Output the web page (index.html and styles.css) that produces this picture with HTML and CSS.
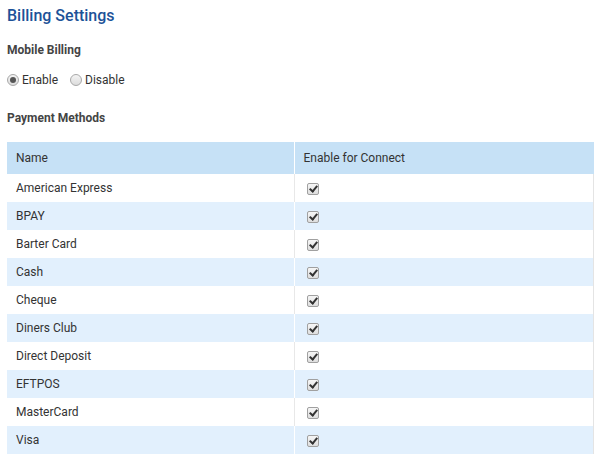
FILE: index.html
```html
<!DOCTYPE html>
<html>
<head>
<meta charset="utf-8">
<link rel="stylesheet" href="styles.css">
</head>
<body>
<div class="page">
  <h1 class="title">Billing Settings</h1>
  <h2 class="section">Mobile Billing</h2>
  <div class="radios">
    <label class="radio"><span class="dot on"></span>Enable</label>
    <label class="radio"><span class="dot"></span>Disable</label>
  </div>
  <h2 class="section pm">Payment Methods</h2>
  <table class="grid">
    <thead>
      <tr><th class="c1">Name</th><th class="c2">Enable for Connect</th></tr>
    </thead>
    <tbody>
      <tr><td>American Express</td><td><span class="cb"></span></td></tr>
      <tr><td>BPAY</td><td><span class="cb"></span></td></tr>
      <tr><td>Barter Card</td><td><span class="cb"></span></td></tr>
      <tr><td>Cash</td><td><span class="cb"></span></td></tr>
      <tr><td>Cheque</td><td><span class="cb"></span></td></tr>
      <tr><td>Diners Club</td><td><span class="cb"></span></td></tr>
      <tr><td>Direct Deposit</td><td><span class="cb"></span></td></tr>
      <tr><td>EFTPOS</td><td><span class="cb"></span></td></tr>
      <tr><td>MasterCard</td><td><span class="cb"></span></td></tr>
      <tr><td>Visa</td><td><span class="cb"></span></td></tr>
    </tbody>
  </table>
</div>
</body>
</html>
```
FILE: styles.css
```css
* { box-sizing: border-box; }
body { margin: 0; background: #fff; font-family: Roboto, "Liberation Sans", sans-serif; color: #333; font-size: 12px; }
.page { padding: 6px 9px 0 7px; }
.title { margin: 0; font-size: 16px; font-weight: 500; color: #1d5298; line-height: 20px; }
.section { margin: 16px 0 0 0; font-size: 12px; font-weight: 700; color: #444; line-height: 16px; }
.radios { display: flex; gap: 12px; margin-top: 14px; line-height: 16px; }
.radio { display: flex; align-items: center; gap: 3px; color: #333; }
.dot { width: 12px; height: 12px; border-radius: 50%; border: 1px solid #a8a8a8; background: linear-gradient(#f4f4f4, #dcdcdc); position: relative; }
.dot.on::after { content: ""; position: absolute; left: 2px; top: 2px; width: 6px; height: 6px; border-radius: 50%; background: #555; }
.pm { margin-top: 22px; }
.grid { margin-top: 16px; width: 587px; border-collapse: collapse; }
.grid th { background: #c6e1f6; font-weight: 400; text-align: left; height: 32px; padding: 0 9px; color: #333; }
.grid th.c1 { width: 287px; border-right: 1px solid #fff; }
.grid td { height: 28px; padding: 0 9px; border-right: 1px solid #e4e4e4; }
.grid td:first-child { border-right: 1px solid #fff; }
.grid tbody tr:nth-child(even) td { background: #e2f0fd; }
.grid tbody tr:nth-child(odd) td:first-child { border-right: 1px solid #e8e8e8; }
.cb { display: inline-block; width: 12px; height: 12px; margin-left: 3px; vertical-align: middle; border: 1px solid #a0a0a0; border-radius: 2px; background: linear-gradient(#f6f6f6, #dedede); position: relative; }
.cb::after { content: ""; position: absolute; left: 3px; top: 0px; width: 3px; height: 6px; border: solid #333; border-width: 0 2px 2px 0; transform: rotate(40deg); }
```
